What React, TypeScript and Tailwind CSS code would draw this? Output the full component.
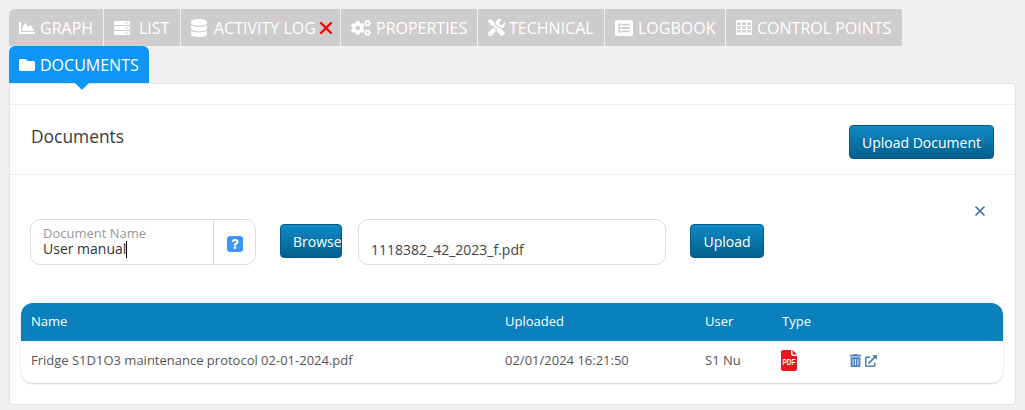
import React from "react";
import { FaChartArea, FaServer, FaDatabase, FaCogs, FaTools, FaListAlt, FaFolder, FaQuestion, FaTrashAlt, FaExternalLinkAlt } from "react-icons/fa";
import { X } from "lucide-react";

const TableIcon = () => (
  <svg width="16" height="15" viewBox="0 0 17 15" preserveAspectRatio="none" className="shrink-0">
    <path
      fillRule="evenodd"
      fill="currentColor"
      d="M1.5 0H15.5C16.3 0 17 .7 17 1.5V13.5C17 14.3 16.3 15 15.5 15H1.5C.7 15 0 14.3 0 13.5V1.5C0 .7 .7 0 1.5 0ZM1.5 2.5V5H5V2.5ZM6.5 2.5V5H10.500V2.5ZM12 2.5V5H15.500V2.5ZM1.500 6.300V8.700H5V6.300ZM6.500 6.300V8.700H10.500V6.300ZM12 6.300V8.700H15.500V6.300ZM1.500 10V12.500H5V10ZM6.500 10V12.500H10.500V10ZM12 10V12.500H15.500V10Z"
    />
  </svg>
);

const tabs: { label: string; w: string; icon: React.ReactNode; gap: string; pl: string; rounded?: boolean; x?: boolean }[] = [
  { label: "GRAPH", w: "w-[94px]", icon: <FaChartArea className="text-[16px]" />, gap: "gap-[5px]", pl: "pl-[10px]", rounded: true },
  { label: "LIST", w: "w-[76px]", icon: <FaServer className="text-[16px]" />, gap: "gap-[9px]", pl: "pl-[10px]" },
  { label: "ACTIVITY LOG", w: "w-[159px]", icon: <FaDatabase className="text-[18px]" />, gap: "gap-[6px]", pl: "pl-[9px]", x: true },
  { label: "PROPERTIES", w: "w-[136px]", icon: <FaCogs className="text-[20px]" />, gap: "gap-[5px]", pl: "pl-[10px]" },
  { label: "TECHNICAL", w: "w-[126px]", icon: <FaTools className="text-[17px]" />, gap: "gap-[4px]", pl: "pl-[10px]" },
  { label: "LOGBOOK", w: "w-[120px]", icon: <FaListAlt className="text-[18px]" />, gap: "gap-[5px]", pl: "pl-[10px]" },
  { label: "CONTROL POINTS", w: "w-[176px]", icon: <TableIcon />, gap: "gap-[5px]", pl: "pl-[10px]" },
];

const btn = "rounded-[4px] border border-[#045a85] bg-gradient-to-b from-[#0f8ac6] to-[#045f8e] text-white text-[14px] font-medium";

export default function App() {
  return (
    <div className="w-[1025px] h-[410px] overflow-hidden bg-[#f0f0f0] pt-[9px] pl-[9px] text-[#333] font-['Open_Sans',sans-serif]">
      <div className="flex gap-px h-[37px]">
        {tabs.map((t) => (
          <div key={t.label} className={`${t.w} flex items-center ${t.gap} ${t.pl} bg-[#cecccc] text-white text-[16px] ${t.rounded ? "rounded-tl-[6px]" : ""}`}>
            {t.icon}
            <span className="whitespace-nowrap">{t.label}</span>
            {t.x && <X size={20} strokeWidth={2.8} className="text-[#f00] -ml-[6px] shrink-0" />}
          </div>
        ))}
      </div>
      <div className="relative w-[140px] h-[37px] flex items-center gap-[5px] pl-[10px] bg-[#0d96f7] text-white text-[16px] rounded-t-[6px]">
        <FaFolder className="text-[16px]" />
        <span>DOCUMENTS</span>
        <div className="absolute left-[66px] top-[37px] w-0 h-0 border-x-[7px] border-x-transparent border-t-[7px] border-t-[#0d96f7]" />
      </div>
      <div className="w-[1007px] h-[322px] bg-white border border-[#e2e2e2] rounded-[4px] flex flex-col">
        <div className="h-[21px] shrink-0 border-b border-[#eeeeee]" />
        <div className="h-[70px] shrink-0 border-b border-[#eeeeee] flex items-start justify-between pl-[21px] pr-[21px]">
          <h2 className="mt-[19px] text-[17.4px] leading-[24px] font-medium text-[#3a3a3a]">Documents</h2>
          <button className={`${btn} mt-[20px] w-[145px] h-[34px]`}>Upload Document</button>
        </div>
        <div className="relative flex items-start pl-[20px] pt-[44px] h-[128px] shrink-0">
          <X size={16} strokeWidth={2.6} className="absolute right-[27px] top-[28px] text-[#3f73b4]" />
          <div className="w-[226px] h-[46px] flex rounded-[10px] border border-[#dcdcdc]">
            <div className="w-[183px] pl-[12px] pt-[6px] border-r border-[#dcdcdc]">
              <div className="text-[13px] leading-[15px] text-[#999]">Document Name</div>
              <div className="flex items-start text-[14px] leading-[15px] text-[#333]">
                <span>User manual</span>
                <span className="h-[17px] w-px bg-black" />
              </div>
            </div>
            <div className="flex-1 flex items-center justify-center pt-[4px] pl-px">
              <div className="w-4 h-4 rounded-[3px] bg-[#3a96f5] flex items-center justify-center text-white">
                <FaQuestion className="text-[10px]" />
              </div>
            </div>
          </div>
          <button className={`${btn} ml-[24px] mt-[5px] w-[62px] h-[34px] text-left pl-[12px] overflow-hidden whitespace-nowrap`}>Browse</button>
          <div className="ml-[16px] w-[308px] h-[46px] rounded-[10px] border border-[#dcdcdc] pl-[12px] pt-[20px] text-[14px] leading-[20px] text-[#444]">1118382_42_2023_f.pdf</div>
          <button className={`${btn} ml-[24px] mt-[5px] w-[74px] h-[34px]`}>Upload</button>
        </div>
        <div className="mx-[11px] w-[982px] h-[80px] rounded-[12px] shadow-[0_1px_2px_rgba(0,0,0,0.2)] text-[13px]">
          <div className="h-[38px] flex items-center bg-[#0a80bd] text-white rounded-t-[12px]">
            <span className="w-[484px] pl-[10px]">Name</span>
            <span className="w-[200px]">Uploaded</span>
            <span className="w-[77px]">User</span>
            <span>Type</span>
          </div>
          <div className="h-[39px] flex items-center text-[#555] text-[13px]">
            <span className="w-[484px] pl-[10px] whitespace-nowrap">Fridge S1D1O3 maintenance protocol 02-01-2024.pdf</span>
            <span className="w-[200px]">02/01/2024 16:21:50</span>
            <span className="w-[76px]">S1 Nu</span>
            <span className="w-[68px]">
              <svg width="16" height="21" viewBox="0 0 16 21" className="block">
                <path d="M2 0H10V4C10 5 11 6 12 6H16V19C16 20 15 21 14 21H2C1 21 0 20 0 19V2C0 1 1 0 2 0ZM11.500 0L16 4.500H11.500Z" fill="#f5101f" />
                <text x="8" y="10.300" transform="scale(1 1.5)" textAnchor="middle" fontSize="6.500" fontWeight="700" fill="#fff" fontFamily="'Liberation Sans', sans-serif">PDF</text>
              </svg>
            </span>
            <span className="flex items-center gap-[3px] text-[#4f81bd]">
              <FaTrashAlt className="text-[13px]" />
              <FaExternalLinkAlt className="text-[12px]" />
            </span>
          </div>
        </div>
      </div>
    </div>
  );
}
